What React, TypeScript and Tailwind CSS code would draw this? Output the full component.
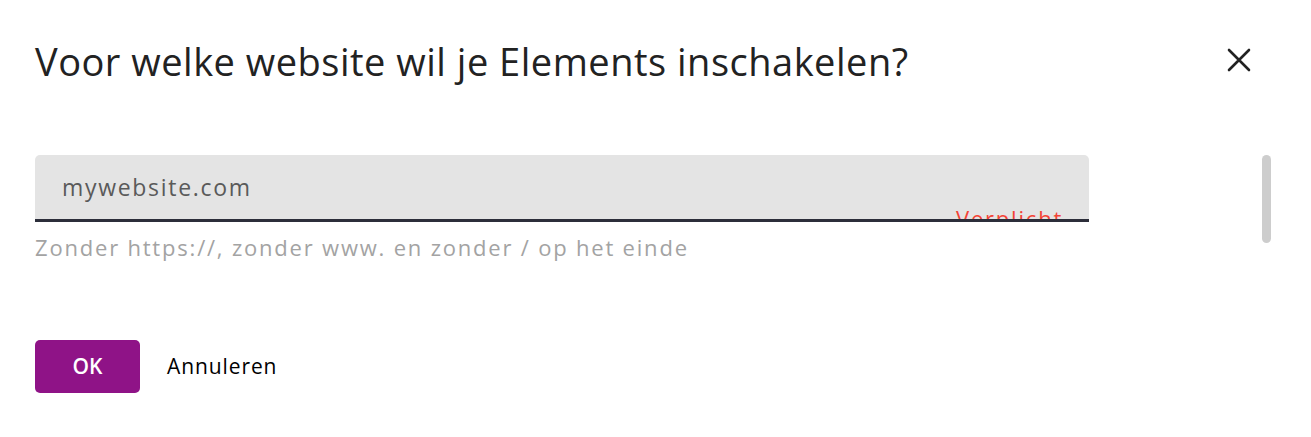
import React from "react";

const font = { fontFamily: "'Open Sans', 'Noto Sans', sans-serif" };

const CloseIcon = () => (
  <svg width="24" height="24" viewBox="0 0 24 24" fill="none">
    <path d="M2 2L22 22M22 2L2 22" stroke="#222" strokeWidth="2.6" strokeLinecap="round" />
  </svg>
);

export default function App() {
  return (
    <div className="w-[1311px] h-[437px] bg-white relative overflow-hidden" style={font}>
      <div className="flex items-start justify-between pl-[35px] pr-[60px] pt-[38px]">
        <h1 className="text-[38px] leading-[46px] tracking-[0.5px] text-[#222] font-normal">
          Voor welke website wil je Elements inschakelen?
        </h1>
        <button className="mt-[10px]">
          <CloseIcon />
        </button>
      </div>

      <div className="flex pl-[35px] pt-[71px]">
        <div className="w-[1054px]">
          <div className="relative h-[67px] bg-[#e4e4e4] rounded-t-[5px] overflow-hidden border-b-[3px] border-[#2c2e3a]">
            <div className="absolute left-[27px] top-[17px] text-[23px] leading-[30px] tracking-[1.7px] text-[#5a5a5a]">
              mywebsite.com
            </div>
            <div className="absolute left-[921px] top-[48px] text-[22px] leading-[30px] tracking-[1.8px] text-[#f44336]">
              Verplicht
            </div>
          </div>
          <div className="pt-[11px] text-[22px] leading-[28px] tracking-[1.8px] text-[#a3a3a3]">
            Zonder https://, zonder www. en zonder / op het einde
          </div>
        </div>
        <div className="ml-[173px] w-[9px] h-[88px] rounded-full bg-[#cdcdcd]" />
      </div>

      <div className="flex items-center gap-[27px] pl-[35px] pt-[79px]">
        <button className="w-[105px] h-[53px] rounded-[5px] bg-[#8f1387] text-white text-[21px] font-semibold">
          OK
        </button>
        <span className="text-[21px] tracking-[0.9px] text-black">Annuleren</span>
      </div>
    </div>
  );
}
